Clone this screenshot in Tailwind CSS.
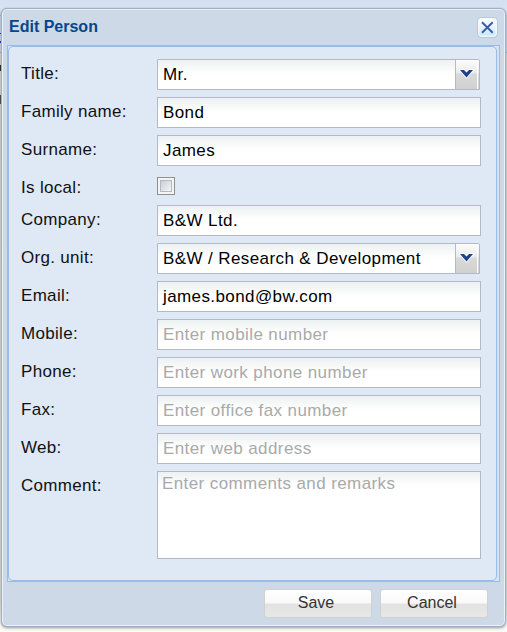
<!DOCTYPE html>
<html lang="en">
<head>
<meta charset="utf-8">
<title>Edit Person</title>
<script src="https://cdn.jsdelivr.net/npm/@tailwindcss/browser@4"></script>
</head>
<body class="relative h-[632px] w-[507px] overflow-hidden bg-[linear-gradient(#d3e0f1_0px,#d8e4f3_10px,#d5e1f0_50px,#e4e4e4_54px,#e9e9e9_600px,#fafaf8_620px)] font-['Liberation_Sans',Arial,sans-serif] text-[17px] tracking-[0.4px] text-[#111]">
<!-- page content peeking out behind the window -->
<div class="absolute left-0 top-[15px] h-px w-[507px] bg-[#a9c6e8]"></div>
<div class="absolute left-0 top-[33px] h-px w-px bg-[#3b3be0]"></div>
<div class="absolute left-0 top-[41px] h-[2px] w-px bg-[#3b3be0]"></div>
<div class="absolute left-0 top-[52px] h-px w-[507px] bg-[#99bbe8]"></div>
<div class="absolute left-0 top-[65px] h-[6px] w-px bg-[#333]"></div>
<div class="absolute left-0 top-[95px] h-[9px] w-px bg-[#555]"></div>

<main class="relative ml-px flex h-[627px] w-[505px] flex-col pt-2">
 <section class="flex h-[619px] flex-col rounded-[6px] border border-[#a2aec6] bg-[#cdd9e7] shadow-[0_1px_3px_rgba(0,0,0,0.4),inset_0_0_0_1px_#e9f1fb]">
  <header class="flex h-9 shrink-0 items-start justify-between pl-[7px] pr-[7px] pt-[8px]">
   <h1 class="text-[16px] font-bold leading-[19px] tracking-normal text-[#04468c]">Edit Person</h1>
   <button aria-label="Close" class="h-[21px] w-[21px]">
    <svg width="21" height="21" viewBox="0 0 21 21"><defs><linearGradient id="c" x1="0" y1="0" x2="0" y2="1"><stop offset="0" stop-color="#fff"/><stop offset=".5" stop-color="#e5f2fe"/><stop offset="1" stop-color="#cbe4fc"/></linearGradient></defs><rect x=".75" y=".75" width="19.5" height="19.5" rx="3" fill="url(#c)" stroke="#a0c4f0"/><rect x="1.8" y="1.8" width="17.4" height="17.4" rx="2" fill="none" stroke="#fff"/><path d="M5 5.3 15.7 15.7M15.7 5.3 5 15.7" stroke="#395ba4" stroke-width="1.9"/></svg>
   </button>
  </header>
  <div class="ml-[5px] h-[537px] w-[493px] shrink-0 border border-[#99bbe8] bg-[#d5e3f5] pr-[2px]">
   <form class="flex h-[535px] flex-col rounded-[5px] border border-[#99bbe8] bg-[#dfe8f5] pl-3 pt-3">
    <div class="flex h-[38px]"><label class="w-[136px] leading-[30px] tracking-[0.31px]">Title:</label><div class="flex h-[31px] w-[323px] rounded-tr-[2px] border border-[#b5b8c8] bg-[linear-gradient(#edf1f1,#fff_14px)] text-black"><span class="w-[297px] pl-[5px] leading-[29px]">Mr.</span><svg class="shrink-0" width="24" height="29" viewBox="0 0 24 29"><defs><linearGradient id="g" x1="0" y1="0" x2="0" y2="1"><stop offset="0" stop-color="#fcfcfc"/><stop offset=".46" stop-color="#eaeaea"/><stop offset=".47" stop-color="#dadada"/><stop offset="1" stop-color="#d0d0d0"/></linearGradient></defs><rect width="24" height="29" fill="url(#g)"/><path d="M.5 0V29" stroke="#b5b8c8"/><path d="M22.5 1V29" stroke="#fff"/><path id="v" d="M5 10H9L11.5 12.5 14 10H18L11.5 17.5Z" fill="#1f4189" stroke="#fff" stroke-width="1.8" paint-order="stroke"/></svg></div></div>
    <div class="flex h-[38px]"><label class="w-[136px] leading-[30px] tracking-[0.31px]">Family name:</label><div class="h-[31px] w-[324px] border border-[#b5b8c8] bg-[linear-gradient(#edf1f1,#fff_14px)] pl-[5px] leading-[29px] text-black">Bond</div></div>
    <div class="flex h-[38px]"><label class="w-[136px] leading-[30px] tracking-[0.31px]">Surname:</label><div class="h-[31px] w-[324px] border border-[#b5b8c8] bg-[linear-gradient(#edf1f1,#fff_14px)] pl-[5px] leading-[29px] text-black">James</div></div>
    <div class="flex h-[32px]"><label class="w-[136px] leading-[30px] tracking-[0.31px]">Is local:</label><div class="mt-[4px] h-[18px] w-[18px] border border-[#8e8f8f] bg-[#f4f4f4] p-[2px]"><div class="h-[12px] w-[12px] border border-[#b5b9c0] bg-linear-to-br from-[#c9ced6] to-[#f6f6f6]"></div></div></div>
    <div class="flex h-[38px]"><label class="w-[136px] leading-[30px] tracking-[0.31px]">Company:</label><div class="h-[31px] w-[324px] border border-[#b5b8c8] bg-[linear-gradient(#edf1f1,#fff_14px)] pl-[5px] leading-[29px] text-black">B&amp;W Ltd.</div></div>
    <div class="flex h-[38px]"><label class="w-[136px] leading-[30px] tracking-[0.31px]">Org. unit:</label><div class="flex h-[31px] w-[323px] rounded-tr-[2px] border border-[#b5b8c8] bg-[linear-gradient(#edf1f1,#fff_14px)] text-black"><span class="w-[297px] pl-[5px] leading-[29px]">B&amp;W / Research &amp; Development</span><svg class="shrink-0" width="24" height="29" viewBox="0 0 24 29"><rect width="24" height="29" fill="url(#g)"/><path d="M.5 0V29" stroke="#b5b8c8"/><path d="M22.5 1V29" stroke="#fff"/><use href="#v"/></svg></div></div>
    <div class="flex h-[38px]"><label class="w-[136px] leading-[30px] tracking-[0.31px]">Email:</label><div class="h-[31px] w-[324px] border border-[#b5b8c8] bg-[linear-gradient(#edf1f1,#fff_14px)] pl-[5px] leading-[29px] text-black">james.bond@bw.com</div></div>
    <div class="flex h-[38px]"><label class="w-[136px] leading-[30px] tracking-[0.31px]">Mobile:</label><div class="h-[31px] w-[324px] border border-[#b5b8c8] bg-[linear-gradient(#edf1f1,#fff_14px)] pl-[5px] leading-[29px] text-[#a9a9a9]">Enter mobile number</div></div>
    <div class="flex h-[38px]"><label class="w-[136px] leading-[30px] tracking-[0.31px]">Phone:</label><div class="h-[31px] w-[324px] border border-[#b5b8c8] bg-[linear-gradient(#edf1f1,#fff_14px)] pl-[5px] leading-[29px] text-[#a9a9a9]">Enter work phone number</div></div>
    <div class="flex h-[38px]"><label class="w-[136px] leading-[30px] tracking-[0.31px]">Fax:</label><div class="h-[31px] w-[324px] border border-[#b5b8c8] bg-[linear-gradient(#edf1f1,#fff_14px)] pl-[5px] leading-[29px] text-[#a9a9a9]">Enter office fax number</div></div>
    <div class="flex h-[38px]"><label class="w-[136px] leading-[30px] tracking-[0.31px]">Web:</label><div class="h-[31px] w-[324px] border border-[#b5b8c8] bg-[linear-gradient(#edf1f1,#fff_14px)] pl-[5px] leading-[29px] text-[#a9a9a9]">Enter web address</div></div>
    <div class="flex"><label class="w-[136px] leading-[30px] tracking-[0.31px]">Comment:</label><div class="h-[88px] w-[324px] border border-[#b5b8c8] bg-[linear-gradient(#edf1f1,#fff_14px)] pl-[4px] pt-[2px] leading-[20px] text-[#a9a9a9]">Enter comments and remarks</div></div>
   </form>
  </div>
  <footer class="flex justify-end gap-2 pr-[17px] pt-[7px] text-[16px] tracking-normal text-[#333]">
   <button class="h-[29px] w-[108px] rounded-[3px] border border-[#d1d1d1] bg-[linear-gradient(#fff,#f9f9f9_48%,#e2e2e2_52%,#e7e7e7)] pb-[2px] pr-1 leading-[25px]">Save</button>
   <button class="h-[29px] w-[108px] rounded-[3px] border border-[#d1d1d1] bg-[linear-gradient(#fff,#f9f9f9_48%,#e2e2e2_52%,#e7e7e7)] pb-[2px] pr-1 leading-[25px]">Cancel</button>
  </footer>
 </section>
</main>
</body>
</html>
